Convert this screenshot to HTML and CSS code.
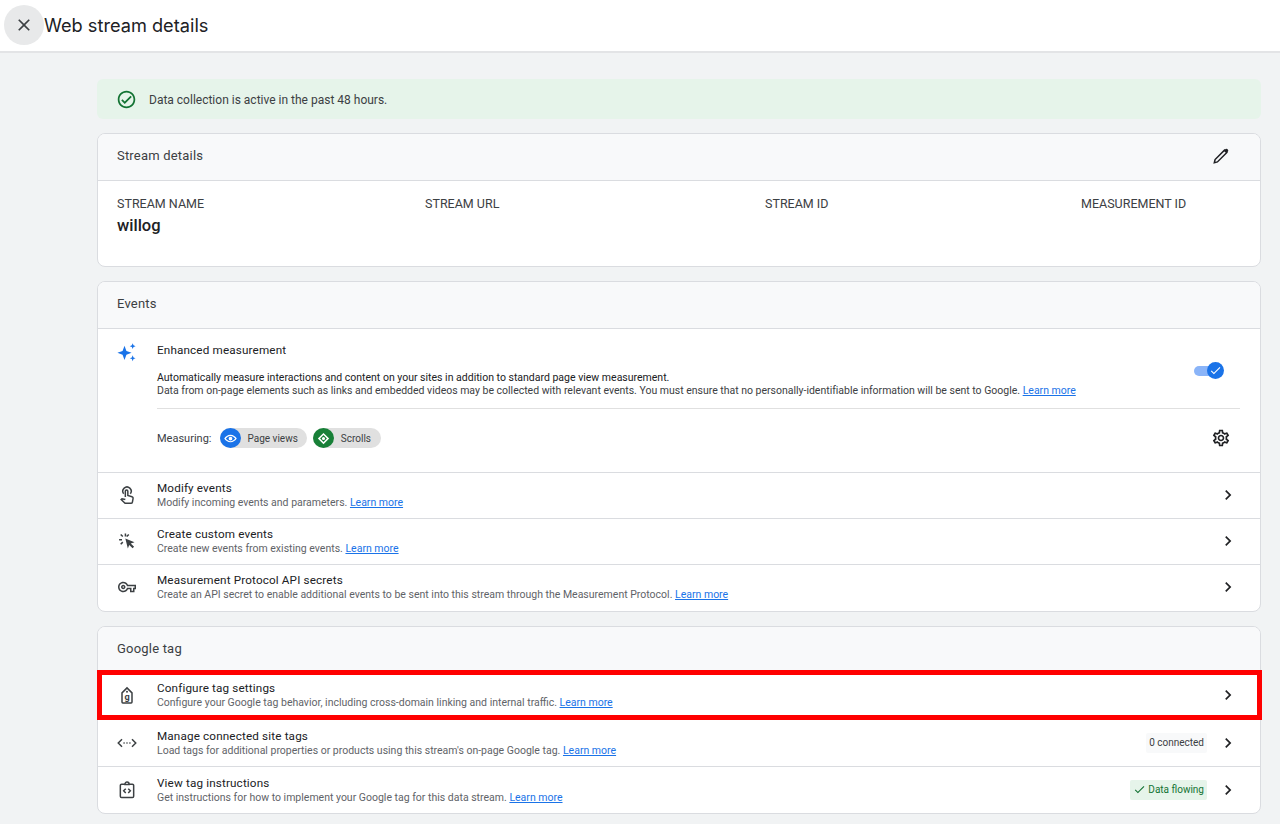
FILE: index.html
```html
<!DOCTYPE html>
<html lang="en">
<head>
<meta charset="utf-8">
<title>Web stream details</title>
<link rel="stylesheet" href="styles.css">
</head>
<body>
<header class="topbar">
  <button class="close" type="button" aria-label="Close">
    <svg class="i20" viewBox="0 0 24 24"><path d="M19 6.41L17.59 5 12 10.59 6.41 5 5 6.41 10.59 12 5 17.59 6.41 19 12 13.41 17.59 19 19 17.59 13.41 12z"/></svg>
  </button>
  <h1 class="title">Web stream details</h1>
</header>
<main class="page">
  <div class="banner">
    <svg class="banner-icon" viewBox="0 0 24 24"><path d="M12 2C6.48 2 2 6.48 2 12s4.48 10 10 10 10-4.48 10-10S17.52 2 12 2zm0 18c-4.41 0-8-3.59-8-8s3.59-8 8-8 8 3.59 8 8-3.59 8-8 8zm4.59-12.42L10 14.17l-2.59-2.58L6 13l4 4 8-8z"/></svg>
    <span>Data collection is active in the past 48 hours.</span>
  </div>

  <section class="card">
    <div class="card-head">
      <span>Stream details</span>
      <svg class="i20 edit" viewBox="0 0 24 24"><path class="edit-body" d="M4 20l.9-3.700L16.200 5l2.800 2.800L7.700 19.100z"/><path d="M15.500 5.700l2.800 2.800 2-2a1.500 1.500 0 0 0 0-2.100l-.7-.7a1.500 1.500 0 0 0-2.100 0z"/></svg>
    </div>
    <div class="details">
      <div><div class="label">STREAM NAME</div><div class="value">willog</div></div>
      <div class="label">STREAM URL</div>
      <div class="label">STREAM ID</div>
      <div class="label">MEASUREMENT ID</div>
    </div>
  </section>

  <section class="card card-events">
    <div class="card-head"><span>Events</span></div>
    <div class="enhanced">
      <svg class="row-icon sparkle" viewBox="0 0 24 24"><path d="M9 4.500l2.300 6.200 6.200 2.300-6.200 2.300-2.300 6.200-2.300-6.200-6.200-2.300 6.200-2.300zM18.800 1.500l1 2.500 2.500 1-2.500 1-1 2.500-1-2.500-2.500-1 2.500-1zM18.800 16l1 2.500 2.500 1-2.500 1-1 2.500-1-2.500-2.500-1 2.500-1z"/></svg>
      <div class="enhanced-body">
        <div class="enhanced-top">
          <div class="enhanced-text">
            <div class="row-title">Enhanced measurement</div>
            <p class="enhanced-desc">Automatically measure interactions and content on your sites in addition to standard page view measurement.<br><span class="muted">Data from on-page elements such as links and embedded videos may be collected with relevant events. You must ensure that no personally-identifiable information will be sent to Google.</span> <a href="#">Learn more</a></p>
          </div>
          <div class="toggle">
            <span class="track"></span>
            <span class="knob"><svg viewBox="0 0 24 24"><path d="M9 16.2L4.8 12l-1.400 1.400L9 19 21 7l-1.400-1.400z"/></svg></span>
          </div>
        </div>
        <div class="measuring">
          <span class="measuring-label">Measuring:</span>
          <span class="chip"><span class="chip-icon blue"><svg viewBox="0 0 24 24"><path d="M12 6c-4.500 0-8 3-10 6 2 3 5.500 6 10 6s8-3 10-6c-2-3-5.500-6-10-6zm0 10.200c-3.200 0-5.800-2-7.500-4.200C6.200 9.800 8.800 7.800 12 7.800s5.800 2 7.500 4.200c-1.700 2.200-4.300 4.200-7.500 4.200zM12 9a3 3 0 1 0 0 6 3 3 0 0 0 0-6z"/></svg></span>Page views</span>
          <span class="chip"><span class="chip-icon green"><svg viewBox="0 0 24 24"><path fill-rule="evenodd" d="M12 3l9 9-9 9-9-9zm0 3.500L6.500 12l5.500 5.500 5.500-5.500zM12 9.500a2.500 2.500 0 1 1 0 5 2.500 2.500 0 0 1 0-5z"/></svg></span><span class="chip-text">Scrolls</span></span>
          <svg class="i20 gear" viewBox="0 0 24 24"><path d="M19.430 12.980c.04-.32.07-.64.07-.98 0-.34-.03-.66-.07-.98l2.110-1.650c.19-.15.24-.42.12-.64l-2-3.460c-.09-.16-.26-.25-.44-.25-.06 0-.12.01-.17.03l-2.490 1c-.52-.4-1.080-.73-1.690-.98l-.38-2.650C14.460 2.180 14.250 2 14 2h-4c-.25 0-.46.18-.49.42l-.38 2.650c-.61.25-1.170.59-1.690.98l-2.490-1c-.06-.02-.12-.03-.18-.03-.17 0-.34.09-.43.25l-2 3.460c-.13.22-.07.49.12.64l2.110 1.650c-.04.32-.07.65-.07.98 0 .33.03.66.07.98l-2.110 1.650c-.19.15-.24.42-.12.64l2 3.460c.09.16.26.25.44.25.06 0 .12-.01.17-.03l2.490-1c.52.4 1.080.73 1.690.98l.38 2.650c.03.24.24.42.49.42h4c.25 0 .46-.18.49-.42l.38-2.650c.61-.25 1.170-.59 1.690-.98l2.490 1c.06.02.12.03.18.03.17 0 .34-.09.43-.25l2-3.460c.12-.22.07-.49-.12-.64l-2.110-1.650zm-1.980-1.710c.04.31.05.52.05.73 0 .21-.02.43-.05.73l-.14 1.130.89.7 1.080.84-.7 1.210-1.270-.51-1.040-.42-.9.68c-.43.32-.84.56-1.250.73l-1.060.43-.16 1.130-.2 1.350h-1.400l-.19-1.350-.16-1.130-1.060-.43c-.43-.18-.83-.41-1.230-.71l-.91-.7-1.060.43-1.270.51-.7-1.210 1.080-.84.89-.7-.14-1.130c-.03-.31-.05-.54-.05-.74s.02-.43.05-.73l.14-1.130-.89-.7-1.080-.84.7-1.210 1.270.51 1.040.42.9-.68c.43-.32.84-.56 1.250-.73l1.060-.43.16-1.130.2-1.350h1.390l.19 1.350.16 1.130 1.060.43c.43.18.83.41 1.230.71l.91.7 1.060-.43 1.270-.51.7 1.210-1.070.85-.89.7.14 1.130zM12 8c-2.210 0-4 1.790-4 4s1.790 4 4 4 4-1.790 4-4-1.790-4-4-4zm0 6c-1.100 0-2-.9-2-2s.9-2 2-2 2 .9 2 2-.9 2-2 2z"/></svg>
        </div>
      </div>
    </div>
    <div class="row">
      <svg class="row-icon line" viewBox="0 0 24 24"><path d="M8 10.500a5 5 0 1 1 8 0"/><path d="M10 14.500V7.500a1.500 1.500 0 0 1 3 0v5l5 1.500c1 .3 1.500 1 1.300 2l-.8 4.500c-.2 1-.8 1.500-1.800 1.500h-6c-.7 0-1.200-.2-1.700-.8L5 17.500l1-1 4 1" /></svg>
      <div class="row-text"><div class="row-title">Modify events</div><div class="row-sub">Modify incoming events and parameters. <a href="#">Learn more</a></div></div>
      <svg class="chev" viewBox="0 0 24 24"><path d="M10 6L8.590 7.410 13.170 12l-4.580 4.590L10 18l6-6z"/></svg>
    </div>
    <div class="row">
      <svg class="row-icon" viewBox="0 0 24 24"><path d="M10 9l11 4.500-4.500 1.500 4 4-1.800 1.800-4-4L13 21zM9.200 3h1.800v3.500H9.200zM2.500 9.500H6v1.800H2.500zM3.800 4.800l1.300-1.300 2.500 2.500-1.300 1.300zM5.100 16.500l-1.300-1.300 2.500-2.500 1.300 1.300zM13.500 3.500l1.300 1.300-2.500 2.500-1.300-1.300z"/></svg>
      <div class="row-text"><div class="row-title">Create custom events</div><div class="row-sub">Create new events from existing events. <a href="#">Learn more</a></div></div>
      <svg class="chev" viewBox="0 0 24 24"><path d="M10 6L8.590 7.410 13.170 12l-4.580 4.590L10 18l6-6z"/></svg>
    </div>
    <div class="row">
      <svg class="row-icon key" viewBox="0 0 24 24"><path d="M22 19h-6v-4h-2.680c-1.140 2.420-3.600 4-6.320 4-3.860 0-7-3.140-7-7s3.140-7 7-7c2.720 0 5.170 1.580 6.320 4H24v6h-2v4zm-4-2h2v-4h2v-2H11.940l-.23-.67C11.010 8.340 9.110 7 7 7c-2.760 0-5 2.240-5 5s2.240 5 5 5c2.110 0 4.010-1.340 4.710-3.330l.23-.67H18v4zM7 15c-1.650 0-3-1.350-3-3s1.350-3 3-3 3 1.350 3 3-1.350 3-3 3zm0-4c-.55 0-1 .45-1 1s.45 1 1 1 1-.45 1-1-.45-1-1-1z"/></svg>
      <div class="row-text"><div class="row-title">Measurement Protocol API secrets</div><div class="row-sub">Create an API secret to enable additional events to be sent into this stream through the Measurement Protocol. <a href="#">Learn more</a></div></div>
      <svg class="chev" viewBox="0 0 24 24"><path d="M10 6L8.590 7.410 13.170 12l-4.580 4.590L10 18l6-6z"/></svg>
    </div>
  </section>

  <section class="card card-tag">
    <div class="card-head"><span>Google tag</span></div>
    <div class="row highlighted">
      <svg class="row-icon line" viewBox="0 0 24 24"><path d="M6 20.500V9.500l6-6 6 6v11a1 1 0 0 1-1 1H7a1 1 0 0 1-1-1z"/><circle class="dot" cx="12" cy="8" r="1.200"/><text class="tag-g" x="12" y="17.500" text-anchor="middle">g</text></svg>
      <div class="row-text"><div class="row-title">Configure tag settings</div><div class="row-sub">Configure your Google tag behavior, including cross-domain linking and internal traffic. <a href="#">Learn more</a></div></div>
      <svg class="chev" viewBox="0 0 24 24"><path d="M10 6L8.590 7.410 13.170 12l-4.580 4.590L10 18l6-6z"/></svg>
    </div>
    <div class="row">
      <svg class="row-icon line" viewBox="0 0 24 24"><path d="M6 7.500L1.500 12 6 16.500M18 7.500l4.500 4.500-4.500 4.500"/><circle class="dot" cx="8.500" cy="12" r="1"/><circle class="dot" cx="12" cy="12" r="1"/><circle class="dot" cx="15.500" cy="12" r="1"/></svg>
      <div class="row-text"><div class="row-title">Manage connected site tags</div><div class="row-sub">Load tags for additional properties or products using this stream's on-page Google tag. <a href="#">Learn more</a></div></div>
      <span class="badge">0 connected</span>
      <svg class="chev" viewBox="0 0 24 24"><path d="M10 6L8.590 7.410 13.170 12l-4.580 4.590L10 18l6-6z"/></svg>
    </div>
    <div class="row">
      <svg class="row-icon line" viewBox="0 0 24 24"><path d="M9.500 5H5.500A1.500 1.500 0 0 0 4 6.500v13A1.500 1.500 0 0 0 5.500 21h13a1.500 1.500 0 0 0 1.500-1.500v-13A1.500 1.500 0 0 0 18.500 5h-4"/><path d="M9.500 5.500V5a2.500 2.500 0 0 1 5 0v.5zM10.500 10.500L8 13l2.500 2.500M13.500 10.500L16 13l-2.500 2.500"/></svg>
      <div class="row-text"><div class="row-title">View tag instructions</div><div class="row-sub">Get instructions for how to implement your Google tag for this data stream. <a href="#">Learn more</a></div></div>
      <span class="badge good"><svg viewBox="0 0 24 24"><path d="M9 16.200L4.800 12l-1.400 1.400L9 19 21 7l-1.400-1.400z"/></svg>Data flowing</span>
      <svg class="chev" viewBox="0 0 24 24"><path d="M10 6L8.590 7.410 13.170 12l-4.580 4.590L10 18l6-6z"/></svg>
    </div>
  </section>
</main>
</body>
</html>
```

FILE: styles.css
```css
* { box-sizing: border-box; }
html, body { margin: 0; height: 100%; }
body {
  font-family: Roboto, "Liberation Sans", sans-serif;
  background: #f1f3f4;
  color: #202124;
  overflow: hidden;
}
svg { display: block; fill: currentColor; flex: none; }
a { color: #1a73e8; text-decoration: underline; }
.i20 { width: 20px; height: 20px; }

.topbar {
  height: 53px;
  background: #fff;
  border-bottom: 2px solid #e3e4e6;
  display: flex;
  align-items: center;
  padding: 0 0 2px 4px;
}
.close {
  width: 40px;
  height: 40px;
  padding: 0;
  border: 0;
  border-radius: 50%;
  background: #e8e9ea;
  color: #3c4043;
  display: flex;
  align-items: center;
  justify-content: center;
}
.title {
  margin: 0;
  font-family: Inter, Roboto, sans-serif;
  font-size: 18.200px;
  font-weight: 400;
  color: #202124;
}

.page {
  padding: 26px 19px 0 97px;
  display: flex;
  flex-direction: column;
  gap: 14px;
}
.banner {
  height: 40px;
  background: #e6f4ea;
  border-radius: 6px;
  display: flex;
  align-items: center;
  padding: 1px 0 0 19px;
  gap: 12px;
  font-size: 12px;
  color: #3c4043;
}
.banner-icon { width: 21px; height: 21px; color: #137333; margin-top: -1px; }

.card {
  background: #fff;
  border: 1px solid #dadce0;
  border-radius: 8px;
}
.card-head {
  height: 47px;
  background: #f8f9fa;
  border-bottom: 1px solid #dadce0;
  border-radius: 7px 7px 0 0;
  display: flex;
  align-items: center;
  justify-content: space-between;
  padding: 0 29px 3px 19px;
  font-size: 13px;
  letter-spacing: 0.2px;
  color: #3c4043;
}
.edit { color: #202124; }
.edit-body { fill: none; stroke: currentColor; stroke-width: 1.800; }

.details {
  height: 85px;
  display: grid;
  grid-template-columns: 308px 340px 316px 1fr;
  padding: 15px 19px 0;
  align-items: start;
}
.label { font-size: 12.500px; line-height: 16px; color: #3c4043; }
.value { font-size: 16.500px; line-height: 22px; font-weight: 500; margin-top: 3px; color: #202124; }

.row-icon { width: 20px; height: 20px; color: #3c4043; }
.key { width: 18px; height: 18px; margin: 0 1px; }
.line { fill: none; stroke: currentColor; stroke-width: 1.8; }
.dot { fill: currentColor; stroke: none; }
.tag-g { font-family: Roboto, sans-serif; font-size: 11px; font-weight: 700; fill: currentColor; stroke: none; }
.sparkle { color: #1a73e8; }

.enhanced {
  height: 144px;
  display: flex;
  padding: 13px 20px 0 19px;
  gap: 20px;
  border-bottom: 1px solid #dadce0;
}
.enhanced-body { flex: 1; min-width: 0; }
.enhanced-top {
  height: 67px;
  display: flex;
  justify-content: space-between;
  border-bottom: 1px solid #e0e0e0;
}
.enhanced-text { padding-top: 1px; }
.row-title { font-size: 11.700px; line-height: 14px; font-weight: 450; color: #202124; letter-spacing: 0.15px; margin-bottom: 1px; }
.enhanced-desc { margin: 14px 0 0; font-size: 10.500px; line-height: 13px; color: #202124; }
.muted { color: #3c4043; letter-spacing: -0.010px; }

.toggle { position: relative; width: 32px; height: 18px; margin: 20px 15px 0 0; }
.track {
  position: absolute;
  left: 1px;
  top: 4px;
  width: 22px;
  height: 10px;
  border-radius: 5px;
  background: #8ab4f8;
}
.knob {
  position: absolute;
  left: 14px;
  top: 0;
  width: 17px;
  height: 17px;
  border-radius: 50%;
  background: #1a73e8;
  color: #fff;
  padding: 2px;
}
.knob svg { width: 13px; height: 13px; }

.measuring {
  display: flex;
  align-items: center;
  height: 58px;
  font-size: 10.500px;
  gap: 6px;
}
.measuring-label { font-size: 11px; color: #3c4043; margin-right: 3px; }
.chip {
  display: flex;
  align-items: center;
  gap: 6px;
  height: 20px;
  padding-right: 9px;
  border-radius: 10px;
  background: #e0e0e0;
  color: #3c4043;
  font-size: 10px;
}
.chip-text { margin: 0 1px; }
.chip-icon {
  width: 21px;
  height: 20px;
  border-radius: 50%;
  color: #fff;
  display: flex;
  align-items: center;
  justify-content: center;
}
.chip-icon svg { width: 15px; height: 15px; }
.blue { background: #1a73e8; }
.green { background: #188038; }
.gear { margin-left: auto; margin-right: 9px; color: #202124; }

.row {
  height: 46px;
  display: flex;
  align-items: center;
  padding: 0 22px 0 19px;
  gap: 20px;
  border-bottom: 1px solid #dadce0;
}
.card-events .row { padding-bottom: 2px; }
.card-tag .row { height: 46.340px; }
.row:last-child { border-bottom: 0; }
.row-text { flex: 1; min-width: 0; }
.row-sub { font-size: 10.500px; line-height: 13px; color: #5f6368; }
.chev { width: 20px; height: 20px; color: #202124; }
.card-tag .highlighted { position: relative; padding-bottom: 4px; }
.highlighted::after {
  content: "";
  position: absolute;
  inset: -4px -2px -1px -1px;
  border: 5px solid #f00;
  pointer-events: none;
}

.badge {
  display: flex;
  align-items: center;
  height: 20px;
  padding: 0 3px;
  font-size: 10px;
  color: #3c4043;
  background: #f8f9fa;
  margin-right: -9px;
  border-radius: 2px;
}
.good { background: #e6f4ea; color: #137333; gap: 2px; }
.good svg { width: 13px; height: 13px; }
```
